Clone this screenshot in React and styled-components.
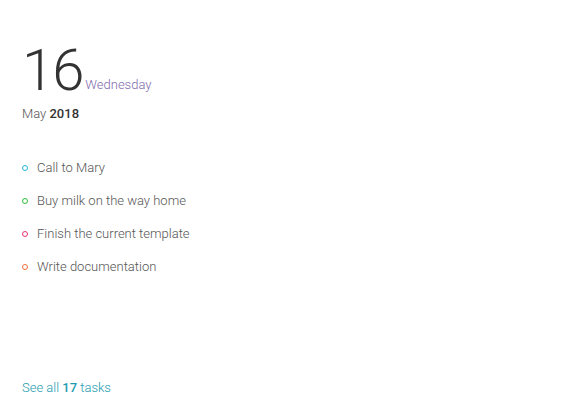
import React from 'react';
import styled, {createGlobalStyle} from 'styled-components';

const GlobalStyle = createGlobalStyle`
  html, body {
    margin: 0;
    background: #fff;
    font-family: Roboto, "Liberation Sans", sans-serif;
  }
`;

const Card = styled.div`
  width: 585px;
  height: 404px;
  box-sizing: border-box;
  padding: 41px 22px 0 22px;
  display: flex;
  flex-direction: column;
`;

const DateRow = styled.div`
  display: flex;
  align-items: baseline;
  gap: 3px;
`;

const Day = styled.span`
  font-size: 58px;
  font-weight: 300;
  line-height: 58px;
  color: #333;
  letter-spacing: -2px;
`;

const Weekday = styled.span`
  position: relative;
  top: -1px;
  font-size: 13px;
  font-weight: 300;
  color: #7e6aae;
`;

const MonthYear = styled.div`
  margin-top: 7px;
  font-size: 13px;
  font-weight: 300;
  color: #555;
  b {
    font-weight: 500;
    color: #333;
  }
`;

const TaskList = styled.ul`
  list-style: none;
  margin: 39px 0 0 0;
  padding: 0;
  display: flex;
  flex-direction: column;
  gap: 17px;
`;

const Task = styled.li`
  display: flex;
  align-items: center;
  gap: 9px;
  font-size: 13px;
  font-weight: 300;
  line-height: 16px;
  color: #555;
`;

const Dot = styled.span`
  width: 4px;
  height: 4px;
  border-radius: 50%;
  border: 1.5px solid ${p => p.$color};
`;

const SeeAll = styled.a`
  margin-top: auto;
  margin-bottom: 9px;
  font-size: 13px;
  font-weight: 300;
  color: #1e9cb0;
  text-decoration: none;
  b {
    font-weight: 500;
  }
`;

const tasks = [
  {text: 'Call to Mary', color: '#1fb5d6'},
  {text: 'Buy milk on the way home', color: '#2dbb3c'},
  {text: 'Finish the current template', color: '#e8336d'},
  {text: 'Write documentation', color: '#f26b3a'}
];

const App = () => (
  <Card>
    <GlobalStyle />
    <DateRow>
      <Day>16</Day>
      <Weekday>Wednesday</Weekday>
    </DateRow>
    <MonthYear>May <b>2018</b></MonthYear>
    <TaskList>
      {tasks.map(t => (
        <Task key={t.text}>
          <Dot $color={t.color} />
          {t.text}
        </Task>
      ))}
    </TaskList>
    <SeeAll href="#">See all <b>17</b> tasks</SeeAll>
  </Card>
);

export default App;
